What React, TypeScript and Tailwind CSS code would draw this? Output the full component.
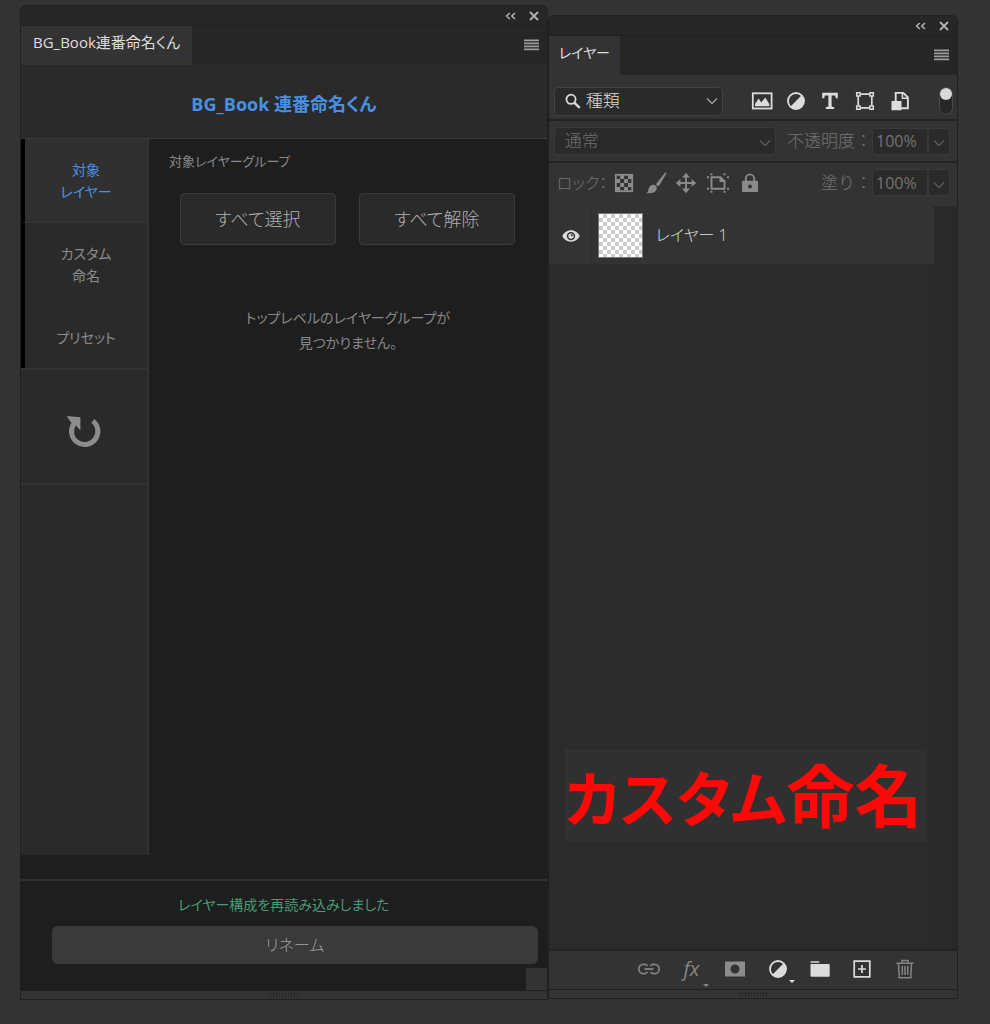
import type { ReactNode } from "react";
import { clsx } from "clsx";

type IconProps = { className?: string };

function CollapseIcon() {
  return (
    <svg viewBox="0 0 12 8" className="h-2 w-3" fill="none" stroke="currentColor" strokeWidth="1.5" aria-hidden>
      <path d="M4.8 1 1.6 4l3.2 3M10 1 6.8 4 10 7" />
    </svg>
  );
}

function CloseIcon() {
  return (
    <svg viewBox="0 0 10 10" className="size-2.5" fill="none" stroke="currentColor" strokeWidth="1.8" aria-hidden>
      <path d="m1 1 8 8M9 1 1 9" />
    </svg>
  );
}

function MenuIcon() {
  return (
    <svg viewBox="0 0 15 12" className="h-3 w-[15px]" fill="currentColor" aria-hidden>
      <path d="M0 .5h15v1.8H0zM0 3.5h15v1.8H0zM0 6.5h15v1.8H0zM0 9.5h15v1.8H0z" />
    </svg>
  );
}

function ChevronIcon({ className }: IconProps) {
  return (
    <svg viewBox="0 0 12 8" className={clsx("h-2 w-3 shrink-0", className)} fill="none" stroke="currentColor" strokeWidth="1.3" aria-hidden>
      <path d="m1 1.5 5 5 5-5" />
    </svg>
  );
}

function SearchIcon() {
  return (
    <svg viewBox="0 0 16 16" className="size-4 shrink-0" fill="none" stroke="currentColor" aria-hidden>
      <circle cx="6" cy="6.3" r="4.6" strokeWidth="1.8" />
      <path d="m9.3 9.6 5.4 5.2" strokeWidth="2.4" />
    </svg>
  );
}

function PixelIcon() {
  return (
    <svg viewBox="0 0 22 18" className="h-[18px] w-[22px]" aria-hidden>
      <rect x="1.8" y="1.3" width="18.8" height="15.2" fill="none" stroke="currentColor" strokeWidth="1.8" />
      <path d="M4 14.2V12l3.6-5.6 2.6 4 .9-1.2 3.2-3.7 4 6.500v2.2z" fill="currentColor" />
    </svg>
  );
}

function AdjustIcon() {
  return (
    <svg viewBox="0 0 20 20" className="size-5" aria-hidden>
      <circle cx="10" cy="10" r="8" fill="none" stroke="currentColor" strokeWidth="1.8" />
      <path d="M15.9 4.1A8.3 8.3 0 0 1 4.1 15.9z" fill="currentColor" />
    </svg>
  );
}

function TypeIcon() {
  return (
    <svg viewBox="0 0 18 18" className="size-[18px]" fill="currentColor" aria-hidden>
      <path d="M1.2.8h15.6v5.4h-2L14.2 3.4h-3.6v11.2l2.6.6v1.9H4.8v-1.9l2.6-.6V3.4H3.8l-.6 2.8h-2z" />
    </svg>
  );
}

function ShapeIcon() {
  return (
    <svg viewBox="0 0 20 20" className="size-5" fill="none" stroke="currentColor" aria-hidden>
      <path d="M5.5 3.2h9M5.5 16.8h9M3.2 5.5v9M16.8 5.5v9" strokeWidth="1.7" />
      <path d="M1.7 1.7h3.4v3.4H1.7zM14.9 1.7h3.4v3.4h-3.4zM1.7 14.9h3.4v3.4H1.7zM14.9 14.9h3.4v3.4h-3.4z" strokeWidth="1.5" />
    </svg>
  );
}

function SmartObjectIcon() {
  return (
    <svg viewBox="0 0 20 20" className="size-5" aria-hidden>
      <path d="M5.7 10V1.9h7.6l4.6 4.6v10.8H11" fill="none" stroke="currentColor" strokeWidth="1.9" />
      <path d="M12.4 2v5.2h5.4" fill="none" stroke="currentColor" strokeWidth="1.5" />
      <path d="M1.5 10h10v9.3h-10z" fill="currentColor" />
    </svg>
  );
}

function CheckerIcon() {
  return (
    <svg viewBox="0 0 20 20" className="size-5" aria-hidden>
      <rect x="1.8" y="1.8" width="16.4" height="16.4" fill="none" stroke="currentColor" strokeWidth="1.8" />
      <path d="M6.2 2h3.9v4h3.9V2H18v4h-4v4h-3.9v4h3.9v4h-3.9v-4H6.2v4H2v-4h4.2v-4H2V6h4.2zM6.2 6v4h3.9V6zM14 10h4v4h-4z" fill="currentColor" />
    </svg>
  );
}

function BrushIcon() {
  return (
    <svg viewBox="0 0 22 22" className="size-[22px]" fill="currentColor" aria-hidden>
      <path d="M21 .6c.5.4.3 1-.1 1.7l-6.2 10.4c-.8 1.2-2 1.6-2.8.9s-.8-1.9.1-2.9L19.8 1c.4-.5.8-.7 1.2-.4z" />
      <path d="M10 13.2c1.5.7 2.3 2.2 1.7 4-.9 3-4.4 4.6-10.7 4 1.9-.8 2-1.9 2.4-3.8.7-3.2 3.600-5.500 6.600-4.200z" />
    </svg>
  );
}

function MoveIcon() {
  return (
    <svg viewBox="0 0 22 22" className="size-[22px]" aria-hidden>
      <path d="M11 4v14M4 11h14" stroke="currentColor" strokeWidth="1.8" />
      <path d="m11 .8 4 4.6H7zM11 21.2l4-4.6H7zM.8 11l4.6-4v8zM21.2 11l-4.6-4v8z" fill="currentColor" />
    </svg>
  );
}

function ArtboardLockIcon() {
  return (
    <svg viewBox="0 0 22 20" className="h-5 w-[22px]" aria-hidden>
      <path d="M4.5 4.2h9l4 4v7.6h-13z" fill="none" stroke="currentColor" strokeWidth="1.9" />
      <path d="M12.5 3.5V9H18z" fill="currentColor" />
      <path d="M3.5.3h2v2h-2zM16.5.3h2v2h-2zM3.5 17.7h2v2h-2zM16.5 17.7h2v2h-2zM0 3.2h2v2H0zM20 3.2h2v2h-2zM0 14.8h2v2H0zM20 14.8h2v2h-2z" fill="currentColor" />
    </svg>
  );
}

function LockIcon() {
  return (
    <svg viewBox="0 0 18 20" className="h-5 w-[18px]" aria-hidden>
      <path d="M4.8 9V5.6a4.2 4.2 0 0 1 8.4 0V9" fill="none" stroke="currentColor" strokeWidth="1.9" />
      <path fillRule="evenodd" d="M2 7.8h14a1 1 0 0 1 1 1V18a1 1 0 0 1-1 1H2a1 1 0 0 1-1-1V8.8a1 1 0 0 1 1-1zm7 3.6a2 2 0 1 0 0 4 2 2 0 0 0 0-4z" fill="currentColor" />
    </svg>
  );
}

function EyeIcon() {
  return (
    <svg viewBox="0 0 18 12" className="h-3 w-[18px]" aria-hidden>
      <path fillRule="evenodd" d="M9 .3c4 0 7.2 2.6 8.7 5.700-1.500 3.100-4.700 5.700-8.700 5.700S1.800 9.100.3 6C1.800 2.900 5 .3 9 .3zM9 1.900a4.200 4.200 0 1 0 0 8.400 4.200 4.200 0 0 0 0-8.400z" fill="currentColor" />
      <circle cx="9" cy="6.1" r="2.7" fill="currentColor" />
      <circle cx="9.8" cy="5.2" r="1" fill="#333" />
    </svg>
  );
}

function LinkIcon() {
  return (
    <svg viewBox="0 0 24 12" className="h-3 w-6" fill="none" stroke="currentColor" strokeWidth="1.9" aria-hidden>
      <path d="M10.6 3a4.9 4.9 0 0 0-4-1.8 4.8 4.8 0 0 0 0 9.6 4.900 4.900 0 0 0 4-1.800M13.400 3a4.900 4.900 0 0 1 4-1.800 4.800 4.800 0 0 1 0 9.600 4.900 4.900 0 0 1-4-1.800M7.500 6h9" />
    </svg>
  );
}

function MaskIcon() {
  return (
    <svg viewBox="0 0 20 16" className="h-4 w-5" aria-hidden>
      <path fillRule="evenodd" d="M0 .5h20v15H0zM10 3.5a4.5 4.5 0 1 0 0 9 4.5 4.5 0 0 0 0-9z" fill="currentColor" />
    </svg>
  );
}

function FolderIcon() {
  return (
    <svg viewBox="0 0 20 16" className="h-4 w-5" fill="currentColor" aria-hidden>
      <path d="M.5.3h8.300l1 1.500H.5zM.5 3h18.200q1 0 1 1v10.700q0 1-1 1H1.500q-1 0-1-1z" />
    </svg>
  );
}

function NewLayerIcon() {
  return (
    <svg viewBox="0 0 18 18" className="size-[18px]" fill="none" stroke="currentColor" aria-hidden>
      <path d="M1.2 1.2h15.6v15.6H1.2z" strokeWidth="1.7" />
      <path d="M9 5v8M5 9h8" strokeWidth="1.7" />
    </svg>
  );
}

function TrashIcon() {
  return (
    <svg viewBox="0 0 18 20" className="h-5 w-[18px]" fill="none" stroke="currentColor" strokeWidth="1.5" aria-hidden>
      <path d="M.5 4.2h17M6 4V1.500h6V4M2.500 4.200l.7 14.500h11.600l.7-14.500M6.300 7v9M9 7v9M11.700 7v9" />
    </svg>
  );
}

function ReloadIcon() {
  return (
    <svg viewBox="0 0 36 36" className="size-9" aria-hidden>
      <path d="M26.8 7.900A13.200 13.200 0 1 1 8.200 10.300" fill="none" stroke="currentColor" strokeWidth="5" />
      <path d="m.8 3 13.600 1.300v13.200l-4-4.500L5 9.500z" fill="currentColor" />
    </svg>
  );
}

/* small triangle under buttons that open a menu */
function ArrowMark() {
  return (
    <svg viewBox="0 0 6 3" className="absolute right-1 -bottom-1 h-[3px] w-1.5" fill="currentColor" aria-hidden>
      <path d="M0 0h6L3 3z" />
    </svg>
  );
}

function IconButton({ label, children, className }: { label: string; children: ReactNode; className?: string }) {
  return (
    <button type="button" aria-label={label} className={clsx("flex shrink-0 items-center justify-center", className)}>
      {children}
    </button>
  );
}

function WindowBar() {
  return (
    <div className="flex h-[19px] items-center justify-end gap-3 pr-2 text-[#b4b4b4]">
      <IconButton label="パネルを折りたたむ">
        <CollapseIcon />
      </IconButton>
      <IconButton label="閉じる">
        <CloseIcon />
      </IconButton>
    </div>
  );
}

function TabBar({ title, className }: { title: string; className?: string }) {
  return (
    <div className="flex h-10 items-center justify-between border-t border-[#202020] bg-[#262626] pr-2">
      <h2 className={clsx("flex h-full items-center bg-[#333] pb-1.5 text-[#dedede]", className)}>{title}</h2>
      <IconButton label="パネルメニュー" className="pb-0.5 text-[#9c9c9c]">
        <MenuIcon />
      </IconButton>
    </div>
  );
}

function ResizeGrip() {
  return (
    <div className="flex h-[9px] items-center justify-center border-t border-[#202020] bg-[#333]">
      <span className="h-1 w-7 bg-[repeating-linear-gradient(90deg,#262626_0_1px,transparent_1px_3px)]" />
    </div>
  );
}

const sideTabs = [
  { id: "target", lines: ["対象", "レイヤー"], height: "h-[84px]", active: true },
  { id: "custom", lines: ["カスタム", "命名"], height: "h-[84px]", active: false },
  { id: "preset", lines: ["プリセット"], height: "h-[61px]", active: false },
];

function RenamePanel() {
  return (
    <section className="flex min-w-0 flex-[528] flex-col overflow-hidden rounded-t-md border border-[#202020] bg-[#262626]">
      <WindowBar />
      <TabBar title="BG_Book連番命名くん" className="px-3 text-[15px]" />
      <header className="flex h-[74px] items-center justify-center border-b border-[#3a3a3a] bg-[#2a2a2a] pt-1">
        <h1 className="text-lg font-bold text-[#4a90e2]">BG_Book 連番命名くん</h1>
      </header>

      <div className="flex flex-1 bg-[#1e1e1e] pb-6">
        <nav className="flex w-32 shrink-0 flex-col border-r-2 border-[#333] bg-[#2a2a2a]">
          {sideTabs.map((tab) => (
            <button
              key={tab.id}
              type="button"
              className={clsx(
                "flex flex-col items-center justify-center border-l-4 border-l-black text-sm leading-[22px]",
                tab.height,
                tab.active ? "border-b border-b-[#333] bg-[#303030] text-[#4a90e2]" : "text-[#8c8c8c]",
              )}
            >
              {tab.lines.map((line) => (
                <span key={line}>{line}</span>
              ))}
            </button>
          ))}
          <button
            type="button"
            aria-label="再読み込み"
            className="flex h-[117px] items-center justify-center border-y-2 border-[#333] pt-2 text-[#8c8c8c]"
          >
            <ReloadIcon />
          </button>
        </nav>

        <main className="min-w-0 flex-1 px-5 pt-3">
          <h3 className="text-[13px] leading-5 text-[#888]">対象レイヤーグループ</h3>
          <div className="mt-[22px] flex gap-[23px] pr-3 pl-[11px]">
            {["すべて選択", "すべて解除"].map((label) => (
              <button
                key={label}
                type="button"
                className="h-[52px] flex-1 rounded border border-[#3a3a3a] bg-[#2a2a2a] text-lg font-light text-[#b0b0b0]"
              >
                {label}
              </button>
            ))}
          </div>
          <p className="mt-[60px] text-center text-sm leading-[25px] text-[#888]">
            トップレベルのレイヤーグループが
            <br />
            見つかりません。
          </p>
        </main>
      </div>

      <footer className="flex flex-col border-t-2 border-[#333] bg-[#1e1e1e] pt-3">
        <p role="status" className="text-center text-sm leading-6 text-[#4a9a78]">
          レイヤー構成を再読み込みしました
        </p>
        <button type="button" className="mt-[9px] mr-[9px] ml-[31px] h-[38px] rounded-md bg-[#3a3a3a] text-base font-light text-[#a0a0a0]">
          リネーム
        </button>
        <span className="mt-1 h-[22px] w-[21px] self-end bg-[#333]" />
      </footer>
      <ResizeGrip />
    </section>
  );
}

function PercentField({ id, label }: { id: string; label: string }) {
  return (
    <div className="flex shrink-0 items-center text-[#747474]">
      <label htmlFor={id} className="text-[17px] font-light [font-feature-settings:normal]">
        {label}：
      </label>
      <div className="flex h-[27px] rounded-sm border border-[#3a3a3a] bg-[#2a2a2a]">
        <input id={id} defaultValue="100%" className="w-14 border-r-2 border-[#363636] bg-transparent pl-[3px] text-base outline-none" />
        <IconButton label={`${label}を調整`} className="w-5 text-[#5a5a5a]">
          <ChevronIcon className="mt-1" />
        </IconButton>
      </div>
    </div>
  );
}

function LayerPanel() {
  return (
    <section className="mt-2.5 mb-px flex min-w-0 flex-[410] flex-col overflow-hidden rounded-t-md border border-[#202020] bg-[#262626]">
      <WindowBar />
      <TabBar title="レイヤー" className="px-2.5 text-sm" />

      <div className="flex h-[46px] items-center justify-between border-b-2 border-[#242424] bg-[#333] pt-2 pr-[5px] pl-[5px] text-[#dcdcdc]">
        <label className="flex h-[29px] w-[169px] items-center rounded border border-[#424242] bg-[#2a2a2a] pr-1 pl-2.5">
          <SearchIcon />
          <select aria-label="フィルターの種類" className="min-w-0 flex-1 appearance-none bg-transparent pl-[5px] text-[17px] font-light outline-none">
            <option>種類</option>
          </select>
          <ChevronIcon className="text-[#a0a0a0]" />
        </label>
        <div className="flex items-center">
          <IconButton label="ピクセルレイヤー" className="w-[34px]"><PixelIcon /></IconButton>
          <IconButton label="調整レイヤー" className="w-[34px]"><AdjustIcon /></IconButton>
          <IconButton label="テキストレイヤー" className="w-[34px]"><TypeIcon /></IconButton>
          <IconButton label="シェイプレイヤー" className="w-9"><ShapeIcon /></IconButton>
          <IconButton label="スマートオブジェクト" className="w-[34px]"><SmartObjectIcon /></IconButton>
        </div>
        <button
          type="button"
          role="switch"
          aria-checked="true"
          aria-label="フィルター"
          className="flex h-[26px] w-3 justify-center rounded-full bg-[#272727] ring-1 ring-[#484848]"
        >
          <span className="size-3 rounded-full bg-[#d8d8d8]" />
        </button>
      </div>

      <div className="flex h-[42px] items-center justify-between border-b-2 border-[#242424] bg-[#333] pr-[7px] pl-[5px] text-[#6e6e6e]">
        <label className="flex h-7 w-[222px] items-center rounded border border-[#3a3a3a] bg-[#2a2a2a] pr-1 pl-2.5">
          <select aria-label="描画モード" className="min-w-0 flex-1 appearance-none bg-transparent text-[17px] font-light outline-none">
            <option>通常</option>
          </select>
          <ChevronIcon className="mt-1 text-[#5a5a5a]" />
        </label>
        <PercentField id="opacity" label="不透明度" />
      </div>

      <div className="flex h-[43px] items-center justify-between bg-[#333] pr-[7px] pb-1 pl-2 text-[#8a8a8a]">
        <div className="flex items-center">
          <span className="w-[51px] text-base font-light whitespace-nowrap text-[#747474]">ロック：</span>
          <IconButton label="透明ピクセルをロック" className="w-8"><CheckerIcon /></IconButton>
          <IconButton label="画像ピクセルをロック" className="w-8"><BrushIcon /></IconButton>
          <IconButton label="位置をロック" className="w-7"><MoveIcon /></IconButton>
          <IconButton label="アートボードの自動ネストを防ぐ" className="w-9"><ArtboardLockIcon /></IconButton>
          <IconButton label="すべてをロック" className="w-7"><LockIcon /></IconButton>
        </div>
        <PercentField id="fill" label="塗り" />
      </div>

      <div className="flex flex-1 bg-[#2a2a2a]">
        <div className="flex min-w-0 flex-1 flex-col justify-between bg-[#2b2b2b]">
          <div className="flex h-[58px] items-center bg-[#333] text-[#dcdcdc]">
            <IconButton label="レイヤーの表示" className="h-full w-[43px] border-r border-[#2e2e2e] pt-0.5 pl-0.5"><EyeIcon /></IconButton>
            <span className="ml-1.5 size-[45px] border border-[#777] bg-white bg-[repeating-conic-gradient(#ccc_0_25%,#fff_0_50%)] bg-size-[8px_8px]" />
            <span className="pl-[13px] text-base font-light">レイヤー 1</span>
          </div>
          <p className="mr-2 mb-[107px] ml-4 h-[93px] bg-[#303030] pr-1 text-center text-[68px] leading-[93px] font-bold whitespace-nowrap text-[#ff0808]">
            <span className="text-[60px]">カスタム</span>命名
          </p>
        </div>
        <div className="w-[23px] shrink-0 bg-[#292929]" />
      </div>

      <div className="flex h-10 items-center justify-end border-t-2 border-[#242424] bg-[#333] pr-[31px] pb-0.5 text-[#dcdcdc]">
        <IconButton label="レイヤーをリンク" className="w-[43px] text-[#7d7d7d]"><LinkIcon /></IconButton>
        <IconButton label="レイヤースタイル" className="relative w-[43px] text-xl text-[#858585] italic">
          <span>fx</span>
          <ArrowMark />
        </IconButton>
        <IconButton label="マスクを追加" className="w-[43px] text-[#8c8c8c]"><MaskIcon /></IconButton>
        <IconButton label="調整レイヤーを作成" className="relative w-[43px]">
          <AdjustIcon />
          <ArrowMark />
        </IconButton>
        <IconButton label="グループを作成" className="w-[41px]"><FolderIcon /></IconButton>
        <IconButton label="新規レイヤー" className="w-[43px]"><NewLayerIcon /></IconButton>
        <IconButton label="削除" className="w-[43px] text-[#858585]"><TrashIcon /></IconButton>
      </div>
      <ResizeGrip />
    </section>
  );
}

export default function App() {
  return (
    <div className="flex min-h-screen bg-[#333] pt-[5px] pr-8 pb-6 pl-5 font-['Open_Sans','Noto_Sans_CJK_JP',sans-serif] [font-feature-settings:'palt']">
      <RenamePanel />
      <LayerPanel />
    </div>
  );
}
